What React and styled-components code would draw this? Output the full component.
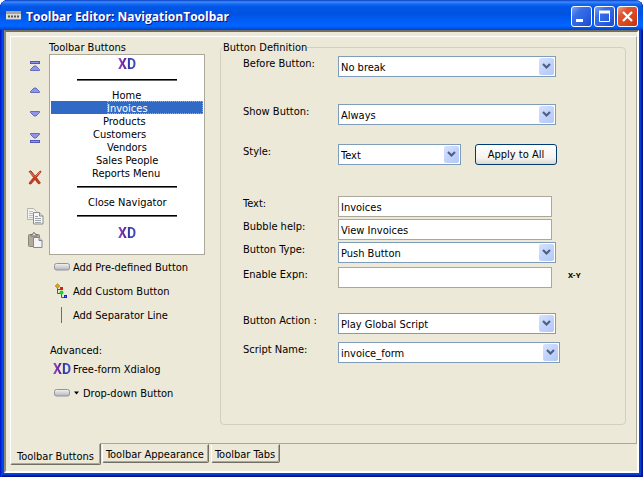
import React, { useState } from "react";
import styled, { createGlobalStyle, css } from "styled-components";

const GlobalStyle = createGlobalStyle`
  * { box-sizing: border-box; }
  body {
    margin: 0;
    background: #fff;
    color: #000;
    font-family: "DejaVu Sans Condensed", "DejaVu Sans", sans-serif;
    font-size: 11px;
    line-height: 13px;
  }
  button, input, select { font: inherit; color: inherit; margin: 0; }
`;

const Window = styled.div`
  display: flex;
  flex-direction: column;
  min-height: 100vh;
  padding: 0 4px 4px;
  border-radius: 8px 8px 0 0;
  overflow: hidden;
  background: #0046e0;
  box-shadow: inset 1px 0 #0019cf, inset 2px 0 #0831d9, inset -1px -1px #00138c,
    inset -2px -2px #001ea0, inset -3px -3px #0441d8;
`;

const TitleBar = styled.header`
  display: flex;
  align-items: center;
  gap: 5px;
  height: 30px;
  margin: 0 -4px;
  padding: 2px 5px 0 6px;
  border-radius: 8px 8px 0 0;
  background: linear-gradient(
    #0a3fc0 0, #3c8cff 2px, #1668f2 4px, #0056e5 7px, #0053e1 14px,
    #0060fa 22px, #0066ff 26px, #0055e8 28px, #003dd0 30px
  );
`;

const Title = styled.h1`
  flex: 1;
  margin: 0;
  padding-top: 1px;
  color: #fff;
  font-family: "Open Sans", sans-serif;
  font-size: 12px;
  font-weight: 700;
  line-height: 20px;
  text-shadow: 1px 1px #0f1089;
  white-space: nowrap;
`;

const WindowControls = styled.div`
  display: flex;
  gap: 2px;
`;

const ControlButton = styled.button`
  display: grid;
  place-items: center;
  width: 21px;
  height: 21px;
  padding: 0;
  border: 1px solid #fff;
  border-radius: 3px;
  background: ${(p) =>
    p.$close
      ? "linear-gradient(135deg, #f0a088 0, #e0532f 30%, #d8441a 70%, #b83410 100%)"
      : "linear-gradient(135deg, #7aa4f4 0, #3a6fe8 30%, #2a5fe0 65%, #1c4ac8 100%)"};
`;

const Client = styled.main`
  flex: 1;
  display: flex;
  flex-direction: column;
  padding: 4px 0 6px 4px;
  background: #ece9d8;
  border: 2px solid;
  border-color: #716f64 #fff #fff #8c897c;
`;

const TabPage = styled.section`
  flex: 1;
  display: flex;
  padding: 4px 10px 18px 14px;
  border: 1px solid;
  border-color: #fff #aca899 #aca899 #fff;
`;

const IconColumn = styled.div`
  display: flex;
  flex-direction: column;
  width: 20px;
  margin-right: 4px;
  padding-top: 13px;
`;

const IconButton = styled.button`
  display: grid;
  place-items: center;
  height: 24px;
  margin-top: ${(p) => (p.$apart ? "15px" : "0")};
  padding: 0;
  border: 0;
  background: none;
`;

const ListColumn = styled.div`
  display: flex;
  flex-direction: column;
  width: 156px;
  margin-right: 15px;
`;

const ListHeading = styled.h2`
  margin: 0;
  font-size: 11px;
  font-weight: 400;
  line-height: 13px;
`;

const ListBox = styled.ul`
  height: 201px;
  margin: 0;
  padding: 0 1px;
  border: 1px solid #aca899;
  background: #fff;
  list-style: none;
`;

const ListItem = styled.li`
  padding-left: ${(p) => p.$indent}px;
  white-space: nowrap;
  ${(p) =>
    p.$selected &&
    css`
      background: #316ac5;
      color: #fff;
    `}
`;

const ItemText = styled.span`
  display: block;
  height: 13px;
  line-height: 15px;
  outline: ${(p) => (p.$selected ? "1px dotted #e8a33c" : "none")};
  outline-offset: -1px;
`;

const LogoItem = styled.li`
  display: grid;
  place-items: center;
  height: 18px;
`;

const SeparatorItem = styled.li`
  height: ${(p) => (p.$tall ? "17px" : "15px")};
  padding: ${(p) => (p.$tall ? "7px" : "6px")} 26px 0;

  &::before {
    content: "";
    display: block;
    height: 2px;
    background: linear-gradient(#000 1px, #666 1px);
  }
`;

const LogoMark = styled.span`
  font-family: Roboto, sans-serif;
  font-size: 14px;
  font-weight: 700;
  line-height: 16px;
  background: linear-gradient(90deg, #9a4cc0, #5a1a98 45%, #3438a0 55%, #3c50c8);
  background-clip: text;
  color: transparent;
`;

const ActionList = styled.div`
  display: flex;
  flex-direction: column;
`;

const ActionButton = styled.button`
  display: flex;
  align-items: center;
  gap: 3px;
  height: 24px;
  padding: 0 0 0 5px;
  border: 0;
  background: none;
  text-align: left;
  white-space: nowrap;
`;

const IconSlot = styled.span`
  display: flex;
  align-items: center;
  justify-content: center;
  width: 16px;
  height: 16px;
`;

const AdvancedHeading = styled.h2`
  margin: 17px 0 0 1px;
  font-size: 11px;
  font-weight: 400;
  line-height: 13px;
`;

const Definition = styled.fieldset`
  flex: 1;
  min-width: 0;
  margin: 0;
  padding: 2px 0 0 22px;
  border: 1px solid #d0d0bf;
  border-radius: 4px;
`;

const Legend = styled.legend`
  margin-left: -20px;
  padding: 0;
`;

const Field = styled.div`
  display: flex;
  align-items: flex-start;
  margin-top: ${(p) => p.$gap}px;
`;

const Label = styled.label`
  width: 95px;
  flex-shrink: 0;
  line-height: 15px;
`;

const TextInput = styled.input`
  width: 214px;
  height: 21px;
  padding: 1px 2px 0;
  border: 1px solid #aca899;
  border-radius: 0;
  background: #fff;
  outline: none;
`;

const SelectBox = styled.div`
  position: relative;
  width: ${(p) => p.$width || 218}px;
`;

const NativeSelect = styled.select`
  display: block;
  width: 100%;
  height: 21px;
  padding: 1px 18px 0 2px;
  border: 1px solid #7f9db9;
  border-radius: 0;
  background: #fff;
  appearance: none;
  outline: none;
`;

const SelectArrow = styled.span`
  position: absolute;
  top: 2px;
  right: 2px;
  display: grid;
  place-items: center;
  width: 15px;
  height: 17px;
  border-radius: 2px;
  background: linear-gradient(135deg, #d8e2fd, #c2d3fc 50%, #b4c8f6);
  pointer-events: none;
`;

const PushButton = styled.button`
  width: 82px;
  height: 21px;
  margin-left: 14px;
  padding: 0;
  border: 1px solid #003c74;
  border-radius: 3px;
  background: linear-gradient(#fff, #f4f3ee 70%, #dcd8cc);
`;

const ExpressionButton = styled.button`
  margin-left: 16px;
  padding: 0;
  border: 0;
  background: none;
  font-family: Roboto, sans-serif;
  font-size: 8px;
  font-weight: 700;
  line-height: 17px;
`;

const TabStrip = styled.nav`
  display: flex;
  align-items: flex-start;
  height: 21px;
`;

const Tab = styled.button`
  height: 19px;
  margin-right: 2px;
  padding: 1px 4px 0 3px;
  border: 1px solid;
  border-color: transparent #716f64 #716f64 #fff;
  border-radius: 0 0 2px 2px;
  background: #ece9d8;
  box-shadow: inset -1px -1px #aca899;
  white-space: nowrap;
  ${(p) =>
    p.$active &&
    css`
      height: 22px;
      margin: -1px 1px 0 0;
      padding: 4px 6px 0;
      border-top-color: #ece9d8;
    `}
`;

function MoveIcon({ down, bar }) {
  return (
    <svg width="12" height="12" viewBox="0 0 12 12" aria-hidden="true">
      <g transform={down ? "matrix(1 0 0 -1 0 12)" : undefined}>
        {bar && <rect x="1.5" y="1.5" width="9" height="2" fill="#8d96e8" stroke="#5057b8" />}
        <path
          d={bar ? "M1.5 10.5h9v-1L7 6H5L1.500 9.500z" : "M1.500 8.500h9v-1L7 4H5L1.500 7.500z"}
          fill="#8d96e8"
          stroke="#5057b8"
          strokeWidth="0.8"
        />
      </g>
    </svg>
  );
}

function DeleteIcon() {
  return (
    <svg width="14" height="15" viewBox="0 0 14 15" aria-hidden="true">
      <path d="M1 1.500Q3 0 4 2l3 4 5-5q1.500 0 1 1L8.500 7.500 12.500 13q-1.500 1.500-2.500.5L7 9.500 3 14q-2 .5-2-1l4.500-5.500z" fill="#c83c20" stroke="#9c2410" strokeWidth="0.6" />
      <path d="M2 2l4 4.500M12 2L7.500 6.500" stroke="#ee8468" fill="none" />
    </svg>
  );
}

function CopyIcon() {
  return (
    <svg width="17" height="17" viewBox="0 0 17 17" aria-hidden="true">
      <path d="M.5.500h6l3 3v8h-9z" fill="#f2f2f0" stroke="#b4b4ac" />
      <path d="M2 3.500h4M2 5.500h5M2 7.500h5M2 9.500h5" stroke="#bcbcbc" />
      <path d="M6.500 4.500h6l3.500 3.500v8H6.500z" fill="#f4f6f8" stroke="#8c8c8c" />
      <path d="M12.500 4.500V8H16" fill="#ddd" stroke="#8c8c8c" />
      <path d="M8 8.500h3M8 10.500h6M8 12.500h6M8 14.500h6" stroke="#9ea4ac" />
    </svg>
  );
}

function PasteIcon() {
  return (
    <svg width="15" height="16" viewBox="0 0 15 16" aria-hidden="true">
      <rect x="0.500" y="2.500" width="11" height="12" rx="1" fill="#b4aa9c" stroke="#8c8478" />
      <path d="M3 4V2.500h1.500Q5 .5 6 .5t1.500 2H9V4z" fill="#ddd" stroke="#74716c" />
      <path d="M5.500 5.500h5.500l3 3v7H5.500z" fill="#f2f4f6" stroke="#84888c" />
      <path d="M11 5.500v3h3" fill="#ccc" stroke="#84888c" />
    </svg>
  );
}

function PillIcon() {
  return (
    <svg width="16" height="8" viewBox="0 0 16 8" aria-hidden="true">
      <defs>
        <linearGradient id="pill" x1="0" y1="0" x2="0" y2="1">
          <stop offset="0" stopColor="#f4f4f6" />
          <stop offset="1" stopColor="#b4b4bc" />
        </linearGradient>
      </defs>
      <rect x="0.500" y="0.500" width="15" height="6.500" rx="2" fill="url(#pill)" stroke="#94949c" />
    </svg>
  );
}

function TreeIcon() {
  return (
    <svg width="16" height="16" viewBox="0 0 16 16" aria-hidden="true">
      <path d="M3.500 4v6.500H6M4 6.500h3M7.500 11v3.500H10" fill="none" stroke="#555" />
      <path d="M3.500.500l2.500 2.500-2.500 2.500L1 3z" fill="#d8a020" stroke="#a87810" strokeWidth="0.500" />
      <rect x="6" y="4" width="3" height="3" fill="#c82810" />
      <circle cx="7.500" cy="9.500" r="2" fill="#10d820" />
      <rect x="10.500" y="12.500" width="2" height="2" fill="#7480ff" stroke="#1420e0" />
    </svg>
  );
}

function LineIcon() {
  return (
    <svg width="16" height="16" viewBox="0 0 16 16" aria-hidden="true">
      <path d="M7.500 0v16" stroke="#716f64" />
    </svg>
  );
}

function CaretIcon() {
  return (
    <svg width="7" height="4" viewBox="0 0 7 4" aria-hidden="true">
      <path d="M1 .5h5L3.500 3.500z" fill="#000" />
    </svg>
  );
}

function ChevronIcon() {
  return (
    <svg width="9" height="7" viewBox="0 0 9 7" aria-hidden="true">
      <path d="M1 1l3.500 3.500L8 1" fill="none" stroke="#4d6185" strokeWidth="2.200" />
    </svg>
  );
}

function AppIcon() {
  return (
    <svg width="15" height="10" viewBox="0 0 15 10" aria-hidden="true">
      <rect width="15" height="9" rx="1" fill="#dcdcd8" />
      <rect y="0" width="15" height="3" fill="#a0a4a8" />
      <path d="M2 5.500h11" stroke="#555" strokeWidth="2" strokeDasharray="2 1" />
      <path d="M0 8.500h15" stroke="#888" />
    </svg>
  );
}

function Logo() {
  return <LogoMark>XD</LogoMark>;
}

function SelectField({ id, value, width }) {
  return (
    <SelectBox $width={width}>
      <NativeSelect id={id} defaultValue={value}>
        <option>{value}</option>
      </NativeSelect>
      <SelectArrow>
        <ChevronIcon />
      </SelectArrow>
    </SelectBox>
  );
}

const ITEMS = [
  { text: "Home", indent: 61 },
  { text: "Invoices", indent: 56 },
  { text: "Products", indent: 52 },
  { text: "Customers", indent: 42 },
  { text: "Vendors", indent: 56 },
  { text: "Sales People", indent: 45 },
  { text: "Reports Menu", indent: 41 },
];

const TABS = ["Toolbar Buttons", "Toolbar Appearance", "Toolbar Tabs"];

export default function App() {
  const [selected, setSelected] = useState("Invoices");
  const [tab, setTab] = useState(TABS[0]);

  return (
    <Window>
      <GlobalStyle />
      <TitleBar>
        <AppIcon />
        <Title>Toolbar Editor: NavigationToolbar</Title>
        <WindowControls>
          <ControlButton aria-label="Minimize">
            <svg width="13" height="13" viewBox="0 0 13 13"><path d="M1 10.500h7" stroke="#fff" strokeWidth="3" /></svg>
          </ControlButton>
          <ControlButton aria-label="Maximize">
            <svg width="13" height="13" viewBox="0 0 13 13"><path d="M1.500 1v10.500h10V1M1 2.500h11" fill="none" stroke="#fff" /><path d="M1 2h11" stroke="#fff" strokeWidth="3" /></svg>
          </ControlButton>
          <ControlButton $close aria-label="Close">
            <svg width="13" height="13" viewBox="0 0 13 13"><path d="M2 2l9 9M11 2l-9 9" stroke="#fff" strokeWidth="2.200" /></svg>
          </ControlButton>
        </WindowControls>
      </TitleBar>

      <Client>
        <TabPage>
          <IconColumn>
            <IconButton aria-label="Move to top"><MoveIcon bar /></IconButton>
            <IconButton aria-label="Move up"><MoveIcon /></IconButton>
            <IconButton aria-label="Move down"><MoveIcon down /></IconButton>
            <IconButton aria-label="Move to bottom"><MoveIcon down bar /></IconButton>
            <IconButton $apart aria-label="Delete"><DeleteIcon /></IconButton>
            <IconButton $apart aria-label="Copy"><CopyIcon /></IconButton>
            <IconButton aria-label="Paste"><PasteIcon /></IconButton>
          </IconColumn>

          <ListColumn>
            <ListHeading id="list-heading">Toolbar Buttons</ListHeading>
            <ListBox role="listbox" aria-labelledby="list-heading">
              <LogoItem role="option"><Logo /></LogoItem>
              <SeparatorItem role="separator" />
              {ITEMS.map((item) => (
                <ListItem
                  key={item.text}
                  role="option"
                  aria-selected={selected === item.text}
                  $selected={selected === item.text}
                  $indent={item.indent}
                  onClick={() => setSelected(item.text)}
                >
                  <ItemText $selected={selected === item.text}>{item.text}</ItemText>
                </ListItem>
              ))}
              <SeparatorItem role="separator" $tall />
              <ListItem role="option" $indent={37}>Close Navigator</ListItem>
              <SeparatorItem role="separator" />
              <LogoItem role="option"><Logo /></LogoItem>
            </ListBox>
            <ActionList>
              <ActionButton><IconSlot><PillIcon /></IconSlot>Add Pre-defined Button</ActionButton>
              <ActionButton><IconSlot><TreeIcon /></IconSlot>Add Custom Button</ActionButton>
              <ActionButton><IconSlot><LineIcon /></IconSlot>Add Separator Line</ActionButton>
              <AdvancedHeading>Advanced:</AdvancedHeading>
              <ActionButton><IconSlot><Logo /></IconSlot>Free-form Xdialog</ActionButton>
              <ActionButton><IconSlot><PillIcon /></IconSlot><CaretIcon />Drop-down Button</ActionButton>
            </ActionList>
          </ListColumn>

          <Definition>
            <Legend>Button Definition</Legend>
            <Field $gap={0}>
              <Label htmlFor="before">Before Button:</Label>
              <SelectField id="before" value="No break" />
            </Field>
            <Field $gap={27}>
              <Label htmlFor="show">Show Button:</Label>
              <SelectField id="show" value="Always" />
            </Field>
            <Field $gap={19}>
              <Label htmlFor="style">Style:</Label>
              <SelectField id="style" value="Text" width={123} />
              <PushButton>Apply to All</PushButton>
            </Field>
            <Field $gap={31}>
              <Label htmlFor="text">Text:</Label>
              <TextInput id="text" defaultValue="Invoices" />
            </Field>
            <Field $gap={2}>
              <Label htmlFor="bubble">Bubble help:</Label>
              <TextInput id="bubble" defaultValue="View Invoices" />
            </Field>
            <Field $gap={2}>
              <Label htmlFor="type">Button Type:</Label>
              <SelectField id="type" value="Push Button" />
            </Field>
            <Field $gap={4}>
              <Label htmlFor="enable">Enable Expn:</Label>
              <TextInput id="enable" />
              <ExpressionButton>X-Y</ExpressionButton>
            </Field>
            <Field $gap={25}>
              <Label htmlFor="action">Button Action :</Label>
              <SelectField id="action" value="Play Global Script" />
            </Field>
            <Field $gap={8}>
              <Label htmlFor="script">Script Name:</Label>
              <SelectField id="script" value="invoice_form" width={222} />
            </Field>
          </Definition>
        </TabPage>
        <TabStrip role="tablist">
          {TABS.map((name) => (
            <Tab
              key={name}
              role="tab"
              aria-selected={tab === name}
              $active={tab === name}
              onClick={() => setTab(name)}
            >
              {name}
            </Tab>
          ))}
        </TabStrip>
      </Client>
    </Window>
  );
}
